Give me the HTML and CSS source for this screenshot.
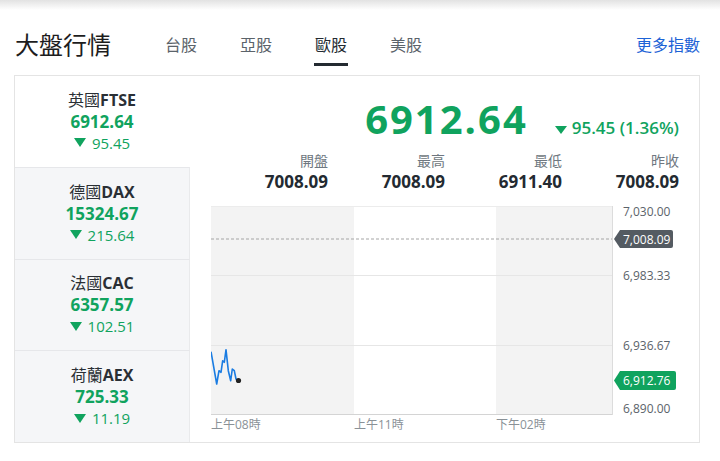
FILE: index.html
```html
<!DOCTYPE html>
<html>
<head>
    <meta charset="utf-8">
    <title>大盤行情</title>
    <link rel="stylesheet" href="styles.css">
</head>
<body>

<div class="topshade"></div>

<div class="head">
    <h1>大盤行情</h1>
    <nav class="tabs">
        <a href="#">台股</a>
        <a href="#">亞股</a>
        <a href="#" class="active">歐股</a>
        <a href="#">美股</a>
    </nav>
    <a href="#" class="more">更多指數</a>
</div>

<div class="card">
    <ul class="indices">
        <li class="selected">
            <div class="idx-name">英國<b>FTSE</b></div>
            <div class="idx-value">6912.64</div>
            <div class="idx-change"><span class="down"></span>95.45</div>
        </li>
        <li>
            <div class="idx-name">德國<b>DAX</b></div>
            <div class="idx-value">15324.67</div>
            <div class="idx-change"><span class="down"></span>215.64</div>
        </li>
        <li>
            <div class="idx-name">法國<b>CAC</b></div>
            <div class="idx-value">6357.57</div>
            <div class="idx-change"><span class="down"></span>102.51</div>
        </li>
        <li>
            <div class="idx-name">荷蘭<b>AEX</b></div>
            <div class="idx-value">725.33</div>
            <div class="idx-change"><span class="down"></span>11.19</div>
        </li>
    </ul>

    <div class="detail">
        <div class="quote">
            <span class="price">6912.64</span>
            <span class="change"><span class="down small"></span>95.45 (1.36%)</span>
        </div>

        <div class="stats">
            <div class="stat"><div class="label">開盤</div><div class="num">7008.09</div></div>
            <div class="stat"><div class="label">最高</div><div class="num">7008.09</div></div>
            <div class="stat"><div class="label">最低</div><div class="num">6911.40</div></div>
            <div class="stat"><div class="label">昨收</div><div class="num">7008.09</div></div>
        </div>

        <svg class="chart" width="468" height="234" viewBox="0 0 468 234">
            <!-- session bands -->
            <rect x="0" y="7" width="143" height="208" fill="#f3f3f3"/>
            <rect x="143" y="7" width="142" height="208" fill="#fff"/>
            <rect x="285" y="7" width="116" height="208" fill="#f3f3f3"/>

            <!-- grid -->
            <line x1="0" y1="7.5" x2="401" y2="7.5" stroke="#ececec"/>
            <line x1="0" y1="76.5" x2="401" y2="76.5" stroke="#e6e6e6"/>
            <line x1="0" y1="146.5" x2="401" y2="146.5" stroke="#e6e6e6"/>
            <line x1="0" y1="215.5" x2="401" y2="215.5" stroke="#d4d4d4"/>
            <line x1="401.5" y1="7" x2="401.5" y2="216" stroke="#dcdcdc"/>

            <!-- previous close -->
            <line x1="0" y1="40" x2="401" y2="40" stroke="#a5a5a5" stroke-dasharray="3 2"/>

            <!-- price line -->
            <polyline fill="none" stroke="#1a7ce2" stroke-width="1.6" stroke-linejoin="round"
                points="0,152.7 5.7,185 8,171.7 10,173.3 11.7,161.7 13.3,163.3 15,150.7 17.3,171.7 19.7,181.7 21.3,170 23.3,171.7 25,180 27.3,181.7"/>
            <circle cx="27.5" cy="181.5" r="2.6" fill="#222"/>

            <!-- y axis -->
            <g class="ylab">
                <text x="412" y="17">7,030.00</text>
                <text x="412" y="81">6,983.33</text>
                <text x="412" y="150.5">6,936.67</text>
                <text x="412" y="213.5">6,890.00</text>
            </g>

            <path d="M403 40 L409 31 H460 a2 2 0 0 1 2 2 V47 a2 2 0 0 1 -2 2 H409 Z" fill="#545b62"/>
            <text class="tag" x="412" y="44.5">7,008.09</text>

            <path d="M403 181.5 L409 172 H463 a2 2 0 0 1 2 2 V189 a2 2 0 0 1 -2 2 H409 Z" fill="#10a35e"/>
            <text class="tag" x="412" y="186">6,912.76</text>

            <!-- x axis -->
            <g class="xlab">
                <text x="0" y="229.5">上午08時</text>
                <text x="143" y="229.5">上午11時</text>
                <text x="285" y="229.5">下午02時</text>
            </g>
        </svg>
    </div>
</div>

</body>
</html>
```

FILE: styles.css
```css
body {
    font-family: "Open Sans", "Noto Sans CJK TC", sans-serif;
    background-color: #fff;
    color: #232a31;
    margin: 0;
    padding: 0;
}

.topshade {
    height: 10px;
    background: linear-gradient(#e2e2e2, #fff);
}

.head {
    display: flex;
    align-items: flex-start;
    height: 65px;
    box-sizing: border-box;
    padding: 23px 20px 0 15px;
}

h1 {
    margin: 0;
    font-size: 24px;
    line-height: 24px;
    font-weight: normal;
    color: #1d1d1d;
}

.tabs {
    display: flex;
    gap: 41px;
    margin-left: 53px;
}

.tabs a {
    font-size: 16px;
    line-height: 24px;
    color: #5b636a;
    text-decoration: none;
    padding: 0 1px 6px;
    border-bottom: 3px solid transparent;
}

.tabs a.active {
    color: #232a31;
    border-bottom-color: #232a31;
}

.more {
    margin-left: auto;
    font-size: 16px;
    line-height: 24px;
    color: #1d63d6;
    text-decoration: none;
}

.card {
    display: flex;
    width: 686px;
    height: 368px;
    box-sizing: border-box;
    margin-left: 14px;
    border: 1px solid #e4e4e4;
}

.indices {
    list-style: none;
    margin: 0;
    padding: 0;
    width: 175px;
    display: flex;
    flex-direction: column;
}

.indices li {
    flex: 1;
    display: flex;
    flex-direction: column;
    justify-content: center;
    align-items: center;
    background-color: #f5f6f8;
    border-top: 1px solid #e6e7ea;
    border-right: 1px solid #e9eaec;
}

.indices li.selected {
    background-color: #fff;
    border-top: none;
    border-right-color: #fff;
}

.idx-name {
    font-size: 16px;
    line-height: 21px;
    color: #2a2f35;
}

.idx-name b {
    font-weight: bold;
}

.idx-value {
    font-size: 17px;
    line-height: 22px;
    font-weight: bold;
    color: #10a35e;
}

.idx-change {
    font-size: 15px;
    line-height: 20px;
    color: #10a35e;
    display: flex;
    align-items: center;
}

.down {
    display: inline-block;
    width: 0;
    height: 0;
    border-left: 6.5px solid transparent;
    border-right: 6.5px solid transparent;
    border-top: 9px solid #10a35e;
    margin-right: 6px;
}

.down.small {
    border-left-width: 6px;
    border-right-width: 6px;
    border-top-width: 8px;
    margin-right: 5px;
}

.detail {
    flex: 1;
    padding: 19px 20px 0 21px;
}

.quote {
    display: flex;
    justify-content: flex-end;
    align-items: baseline;
    gap: 27px;
}

.price {
    font-size: 40px;
    line-height: 48px;
    font-weight: bold;
    letter-spacing: 2px;
    color: #10a35e;
}

.change {
    font-size: 17px;
    font-weight: 600;
    color: #10a35e;
}

.stats {
    display: grid;
    grid-template-columns: repeat(4, 1fr);
    margin-top: 8px;
    text-align: right;
}

.label {
    font-size: 14px;
    line-height: 20px;
    color: #6e7780;
}

.num {
    font-size: 17px;
    line-height: 22px;
    font-weight: bold;
    color: #232a31;
}

.chart {
    display: block;
    margin-top: 6px;
}

.ylab text {
    font-size: 12px;
    fill: #5b636a;
}

.tag {
    font-size: 12px;
    fill: #fff;
}

.xlab text {
    font-size: 12px;
    fill: #8a9197;
}
```
